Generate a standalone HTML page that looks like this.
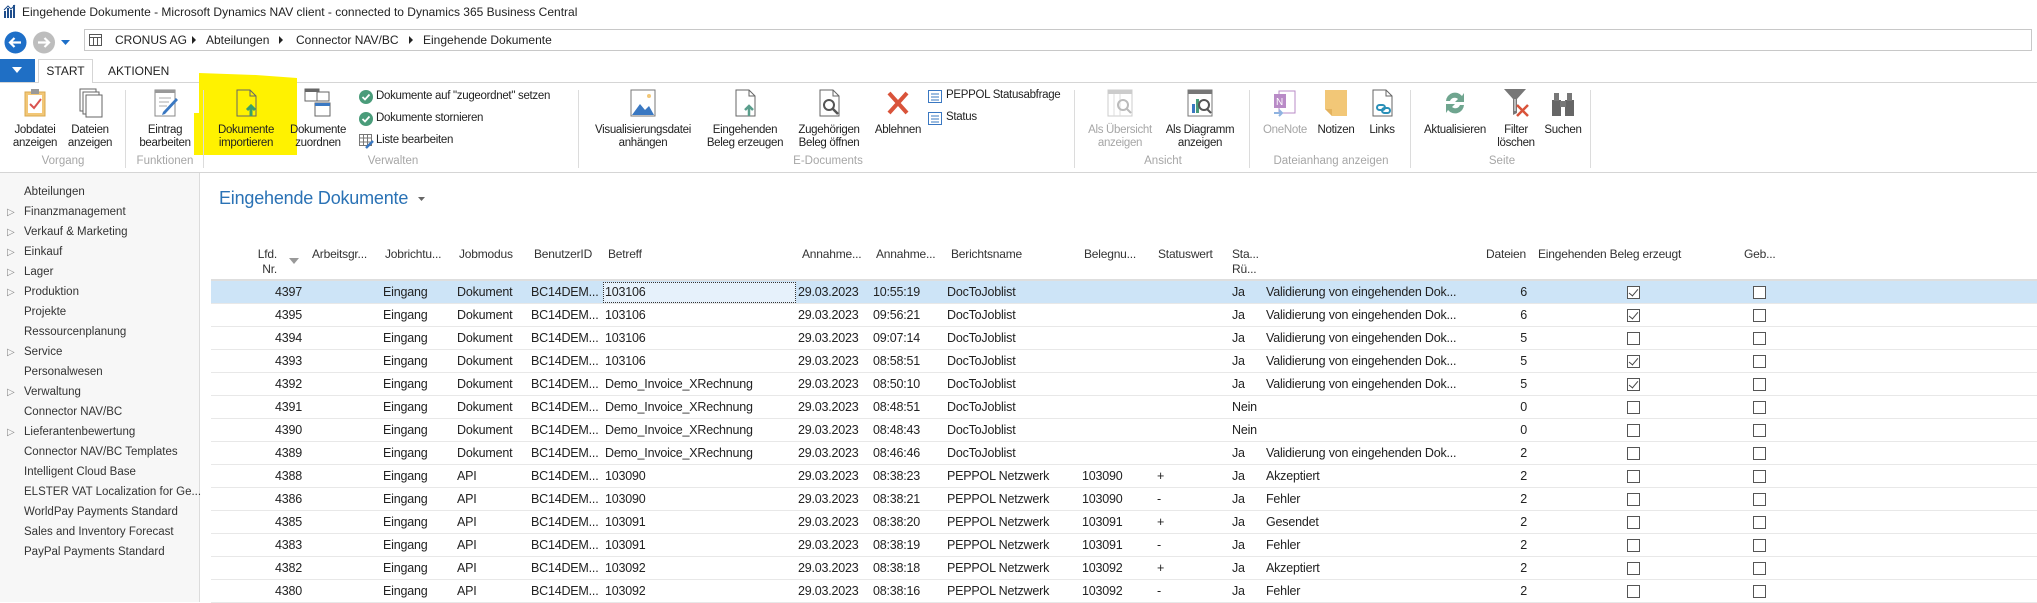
<!DOCTYPE html>
<html><head><meta charset="utf-8">
<style>
*{margin:0;padding:0;box-sizing:border-box}
body{width:2037px;height:602px;overflow:hidden;background:#fff;font-family:"Liberation Sans",sans-serif;color:#222;position:relative}
.a{position:absolute;white-space:nowrap}
.btn{position:absolute;top:88px;text-align:center;font-size:11.5px;letter-spacing:-0.3px;line-height:13px;color:#222;white-space:nowrap}
.btn svg{display:block;margin:0 auto 6px auto}
.btn.g{color:#a6a6a6}
.sep{position:absolute;top:90px;width:1px;height:78px;background:#dcdcdc}
.gl{position:absolute;top:155px;font-size:11.5px;color:#a6a6a6;transform:translateX(-50%);white-space:nowrap}
.sm{position:absolute;font-size:11.5px;letter-spacing:-0.3px;color:#222;white-space:nowrap}
.nav{position:absolute;left:24px;font-size:11.5px;color:#333;white-space:nowrap}
.tri{position:absolute;left:7px;font-size:10px;color:#888;line-height:14px}
.h{position:absolute;font-size:12px;letter-spacing:-0.2px;color:#333;white-space:nowrap;line-height:15px}
.r{position:absolute;left:211px;width:1826px;height:23px;border-bottom:1px solid #e8e8e8;font-size:12.5px;letter-spacing:-0.2px;line-height:22px}
.r span{position:absolute;top:0;white-space:nowrap}
.r .n{left:39px;width:52px;text-align:right}
.r .c1{left:172px}.r .c2{left:246px}.r .c3{left:320px}.r .c4{left:394px}.r .c5{left:587px}.r .c6{left:662px}.r .c7{left:736px}.r .c8{left:871px}.r .c9{left:946px}.r .c10{left:1021px}.r .c11{left:1055px}
.r .d{left:1276px;width:40px;text-align:right}
.cb{position:absolute;top:5px;width:13px;height:13px;border:1px solid #555;background:#fff}
.cb.k::after{content:"";position:absolute;left:3px;top:0px;width:4px;height:8px;border-right:1px solid #444;border-bottom:1px solid #444;transform:rotate(40deg)}
.cb.x{left:1416px}.cb.y{left:1542px}
.bc{position:absolute;top:33px;font-size:12px;color:#222;white-space:nowrap}
.ar{position:absolute;top:36px;width:0;height:0;border-top:4px solid transparent;border-bottom:4px solid transparent;border-left:4px solid #222}
</style></head><body>

<!-- title bar -->
<svg class="a" style="left:3px;top:4px" width="13" height="14" viewBox="0 0 13 14"><rect x="1" y="7" width="2" height="7" fill="#1f4e8c"/><rect x="4" y="4" width="2" height="10" fill="#1f4e8c"/><rect x="7" y="6" width="2" height="8" fill="#1f4e8c"/><rect x="10" y="1" width="2" height="13" fill="#1f4e8c"/><path d="M1 6 L5 2 L8 5 L12 1" stroke="#1f4e8c" fill="none"/></svg>
<div class="a" style="left:22px;top:5px;font-size:12px;color:#222">Eingehende Dokumente - Microsoft Dynamics NAV client - connected to Dynamics 365 Business Central</div>

<!-- nav bar -->
<svg class="a" style="left:4px;top:31px" width="75" height="23" viewBox="0 0 75 23">
<circle cx="11.5" cy="11.5" r="11" fill="#1e6fc8"/><path d="M17 11.5H6M10.5 7L6 11.5 10.5 16" stroke="#fff" stroke-width="2.2" fill="none"/>
<circle cx="40" cy="11.5" r="11" fill="#bdbdbd"/><path d="M34 11.5H45M40.5 7L45 11.5 40.5 16" stroke="#fff" stroke-width="2.2" fill="none"/>
<path d="M57 9h9l-4.5 5z" fill="#1e6fc8"/></svg>
<div class="a" style="left:84px;top:29px;width:1948px;height:22px;border:1px solid #c8c8c8"></div>
<svg class="a" style="left:89px;top:34px" width="13" height="12" viewBox="0 0 13 12"><rect x=".5" y=".5" width="12" height="11" fill="none" stroke="#555"/><path d="M.5 3.5h12M4.5 3.5v8M8.5 3.5v8" stroke="#555"/></svg>
<div class="bc" style="left:115px">CRONUS AG</div>
<div class="ar" style="left:192px"></div>
<div class="bc" style="left:206px">Abteilungen</div>
<div class="ar" style="left:279px"></div>
<div class="bc" style="left:296px">Connector NAV/BC</div>
<div class="ar" style="left:409px"></div>
<div class="bc" style="left:423px">Eingehende Dokumente</div>

<!-- tabs -->
<div class="a" style="left:0;top:59px;width:35px;height:23px;background:#1f6fc5"></div>
<svg class="a" style="left:12px;top:67px" width="10" height="6"><path d="M0 0h10L5 6z" fill="#fff"/></svg>
<div class="a" style="left:0;top:82px;width:2037px;height:1px;background:#d5d5d5"></div>
<div class="a" style="left:38px;top:59px;width:55px;height:24px;border:1px solid #d5d5d5;border-bottom:none;background:#fff;font-size:12px;text-align:center;line-height:22px;color:#222">START</div>
<div class="a" style="left:108px;top:64px;font-size:12px;color:#222">AKTIONEN</div>

<!-- yellow highlight -->
<div class="a" style="left:194px;top:73px;width:103px;height:82px;background:#fff200;clip-path:polygon(5px 0,60% 2px,100% 5px,100% 100%,0 100%,0 40px,5px 40px)"></div>

<!-- ribbon -->
<div class="a" style="left:0;top:172px;width:2037px;height:1px;background:#d5d5d5"></div>

<div class="btn" style="left:8px;width:54px"><svg width="28" height="30" viewBox="0 0 28 30"><rect x="4" y="4" width="20" height="24" fill="#f2c777" stroke="#d9a84f"/><rect x="7" y="7" width="14" height="18" fill="#fff"/><rect x="10" y="1" width="8" height="5" fill="#999"/><path d="M9 16l4 4 7-9" stroke="#d9534f" stroke-width="2" fill="none"/></svg>Jobdatei<br>anzeigen</div>
<div class="btn" style="left:64px;width:52px"><svg width="28" height="30" viewBox="0 0 28 30"><rect x="4" y="1" width="16" height="22" fill="#fff" stroke="#666"/><rect x="7" y="4" width="16" height="22" fill="#fff" stroke="#666"/><rect x="10" y="7" width="16" height="22" fill="#fff" stroke="#666"/></svg>Dateien<br>anzeigen</div>
<div class="btn" style="left:137px;width:56px"><svg width="28" height="30" viewBox="0 0 28 30"><rect x="4" y="2" width="20" height="26" fill="#fff" stroke="#888"/><rect x="4" y="2" width="20" height="3" fill="#999"/><path d="M8 10h12M8 14h10M8 18h8" stroke="#aaa"/><path d="M12 24l13-14 2 2-13 14-3 1z" fill="#3a78c2"/></svg>Eintrag<br>bearbeiten</div>
<div class="sep" style="left:125px"></div>
<div class="sep" style="left:203px"></div>
<div class="btn" style="left:212px;width:68px"><svg width="28" height="30" viewBox="0 0 28 30"><path d="M5 2h13l6 6v20H5z" fill="none" stroke="#666"/><path d="M18 2v6h6" fill="none" stroke="#666"/><path d="M19 28v-9M15 22l4-4 4 4" stroke="#3aa06b" stroke-width="3" fill="none"/></svg>Dokumente<br>importieren</div>
<div class="btn" style="left:284px;width:68px"><svg width="28" height="30" viewBox="0 0 28 30"><rect x="1" y="1" width="14" height="12" fill="#fff" stroke="#666"/><rect x="1" y="1" width="14" height="3" fill="#666"/><rect x="11" y="15" width="15" height="13" fill="#fff" stroke="#666"/><rect x="11" y="15" width="15" height="3" fill="#3a78c2"/><rect x="13" y="4" width="12" height="9" fill="#fff" stroke="#666"/></svg>Dokumente<br>zuordnen</div>
<svg class="a" style="left:359px;top:90px" width="14" height="14"><circle cx="7" cy="7" r="7" fill="#4a9c7a"/><path d="M3.5 7l2.5 2.5 4.5-5" stroke="#fff" stroke-width="1.8" fill="none"/></svg>
<div class="sm" style="left:376px;top:90px">Dokumente auf "zugeordnet" setzen</div>
<svg class="a" style="left:359px;top:112px" width="14" height="14"><circle cx="7" cy="7" r="7" fill="#4a9c7a"/><path d="M3.5 7l2.5 2.5 4.5-5" stroke="#fff" stroke-width="1.8" fill="none"/></svg>
<div class="sm" style="left:376px;top:112px">Dokumente stornieren</div>
<svg class="a" style="left:359px;top:134px" width="15" height="15"><rect x=".5" y=".5" width="12" height="11" fill="#fff" stroke="#777"/><path d="M.5 4h12M.5 8h12M4.5 .5v11M8.5 .5v11" stroke="#777"/><path d="M7 14l7-7" stroke="#3a78c2" stroke-width="2.5"/></svg>
<div class="sm" style="left:376px;top:134px">Liste bearbeiten</div>
<div class="sep" style="left:578px"></div>

<div class="btn" style="left:588px;width:110px"><svg width="28" height="30" viewBox="0 0 28 30"><rect x="2" y="2" width="24" height="26" fill="#fff" stroke="#777"/><path d="M3 27l8-11 5 6 4-4 5 9z" fill="#3a78c2"/><circle cx="20" cy="8" r="2" fill="#f2c777"/></svg>Visualisierungsdatei<br>anhängen</div>
<div class="btn" style="left:705px;width:80px"><svg width="28" height="30" viewBox="0 0 28 30"><path d="M5 2h13l6 6v20H5z" fill="none" stroke="#666"/><path d="M18 2v6h6" fill="none" stroke="#666"/><path d="M18 28v-9M14 22l4-4 4 4" stroke="#5a9e8c" stroke-width="2.5" fill="none"/></svg>Eingehenden<br>Beleg erzeugen</div>
<div class="btn" style="left:794px;width:70px"><svg width="28" height="30" viewBox="0 0 28 30"><path d="M5 2h13l6 6v20H5z" fill="none" stroke="#666"/><path d="M18 2v6h6" fill="none" stroke="#666"/><circle cx="14" cy="17" r="5" fill="none" stroke="#555" stroke-width="2"/><path d="M18 21l5 5" stroke="#555" stroke-width="2.5"/></svg>Zugehörigen<br>Beleg öffnen</div>
<div class="btn" style="left:870px;width:56px"><svg width="28" height="30" viewBox="0 0 28 30"><path d="M5 5l18 20M23 5L5 25" stroke="#d9533a" stroke-width="4"/></svg>Ablehnen</div>
<svg class="a" style="left:928px;top:90px" width="14" height="13"><rect x=".5" y=".5" width="13" height="12" fill="#fff" stroke="#3a78c2"/><path d="M3 4h8M3 7h8M3 10h8" stroke="#3a78c2"/></svg>
<div class="sm" style="left:946px;top:89px">PEPPOL Statusabfrage</div>
<svg class="a" style="left:928px;top:112px" width="14" height="13"><rect x=".5" y=".5" width="13" height="12" fill="#fff" stroke="#3a78c2"/><path d="M3 4h8M3 7h8M3 10h8" stroke="#3a78c2"/></svg>
<div class="sm" style="left:946px;top:111px">Status</div>
<div class="sep" style="left:1074px"></div>

<div class="btn g" style="left:1082px;width:76px"><svg width="28" height="30" viewBox="0 0 28 30"><rect x="2" y="2" width="24" height="26" fill="#fff" stroke="#ccc"/><rect x="2" y="2" width="24" height="4" fill="#ccc"/><path d="M8 6v22M14 6v22" stroke="#ddd"/><circle cx="17" cy="17" r="5" fill="none" stroke="#bbb" stroke-width="2"/><path d="M21 21l4 4" stroke="#bbb" stroke-width="2"/></svg>Als Übersicht<br>anzeigen</div>
<div class="btn" style="left:1160px;width:80px"><svg width="28" height="30" viewBox="0 0 28 30"><rect x="2" y="2" width="24" height="26" fill="#fff" stroke="#777"/><rect x="2" y="2" width="24" height="4" fill="#777"/><rect x="6" y="16" width="3" height="9" fill="#3a78c2"/><rect x="10" y="11" width="3" height="14" fill="#4a9c7a"/><circle cx="18" cy="17" r="5" fill="none" stroke="#555" stroke-width="2"/><path d="M21 21l4 4" stroke="#555" stroke-width="2"/></svg>Als Diagramm<br>anzeigen</div>
<div class="sep" style="left:1249px"></div>
<div class="btn g" style="left:1260px;width:50px"><svg width="28" height="30" viewBox="0 0 28 30"><rect x="8" y="3" width="16" height="22" fill="#fff" stroke="#b98bc7"/><rect x="3" y="6" width="12" height="14" fill="#b98bc7"/><text x="5" y="17" font-size="10" fill="#fff" font-family="Liberation Sans">N</text><path d="M3 25h8M8 22l3 3-3 3" stroke="#8fb3e0" stroke-width="2" fill="none"/></svg>OneNote</div>
<div class="btn" style="left:1312px;width:48px"><svg width="28" height="30" viewBox="0 0 28 30"><path d="M3 2h22v26H10l-7-7z" fill="#f2c777"/><path d="M3 21h7v7z" fill="#e3b25e"/></svg>Notizen</div>
<div class="btn" style="left:1364px;width:36px"><svg width="28" height="30" viewBox="0 0 28 30"><path d="M5 2h13l6 6v20H5z" fill="#fff" stroke="#666"/><path d="M18 2v6h6" fill="none" stroke="#666"/><rect x="9" y="17" width="8" height="5" rx="2.5" fill="none" stroke="#2a90b8" stroke-width="2"/><rect x="14" y="20" width="8" height="5" rx="2.5" fill="none" stroke="#2a90b8" stroke-width="2"/></svg>Links</div>
<div class="sep" style="left:1410px"></div>
<div class="btn" style="left:1418px;width:74px"><svg width="28" height="30" viewBox="0 0 28 30"><path d="M5 13a9 9 0 0 1 16-5l2-3v9h-9l3-3a5 5 0 0 0-8 2z" fill="#6fa58f"/><path d="M23 17a9 9 0 0 1-16 5l-2 3v-9h9l-3 3a5 5 0 0 0 8-2z" fill="#6fa58f"/></svg>Aktualisieren</div>
<div class="btn" style="left:1496px;width:40px"><svg width="28" height="30" viewBox="0 0 28 30"><path d="M2 1h22l-9 10v14l-4 2V11z" fill="#777"/><path d="M13 11v12" stroke="#fff"/><path d="M15 17l11 11M26 17L15 28" stroke="#d9533a" stroke-width="2.5"/></svg>Filter<br>löschen</div>
<div class="btn" style="left:1543px;width:40px"><svg width="28" height="30" viewBox="0 0 28 30"><rect x="3" y="12" width="9" height="16" fill="#666"/><rect x="16" y="12" width="9" height="16" fill="#666"/><rect x="5" y="5" width="5" height="8" fill="#777"/><rect x="18" y="5" width="5" height="8" fill="#777"/><rect x="11" y="13" width="6" height="6" fill="#777"/></svg>Suchen</div>
<div class="sep" style="left:1590px"></div>

<div class="gl" style="left:63px">Vorgang</div>
<div class="gl" style="left:165px">Funktionen</div>
<div class="gl" style="left:393px">Verwalten</div>
<div class="gl" style="left:828px">E-Documents</div>
<div class="gl" style="left:1163px">Ansicht</div>
<div class="gl" style="left:1331px">Dateianhang anzeigen</div>
<div class="gl" style="left:1502px">Seite</div>

<!-- left nav -->
<div class="a" style="left:0;top:173px;width:200px;height:429px;background:#f7f7f7;border-right:1px solid #dcdcdc"></div>
<div class="nav" style="top:186px">Abteilungen</div>
<div class="tri" style="top:206px">&#9655;</div><div class="nav" style="top:206px">Finanzmanagement</div>
<div class="tri" style="top:226px">&#9655;</div><div class="nav" style="top:226px">Verkauf &amp; Marketing</div>
<div class="tri" style="top:246px">&#9655;</div><div class="nav" style="top:246px">Einkauf</div>
<div class="tri" style="top:266px">&#9655;</div><div class="nav" style="top:266px">Lager</div>
<div class="tri" style="top:286px">&#9655;</div><div class="nav" style="top:286px">Produktion</div>
<div class="nav" style="top:306px">Projekte</div>
<div class="nav" style="top:326px">Ressourcenplanung</div>
<div class="tri" style="top:346px">&#9655;</div><div class="nav" style="top:346px">Service</div>
<div class="nav" style="top:366px">Personalwesen</div>
<div class="tri" style="top:386px">&#9655;</div><div class="nav" style="top:386px">Verwaltung</div>
<div class="nav" style="top:406px">Connector NAV/BC</div>
<div class="tri" style="top:426px">&#9655;</div><div class="nav" style="top:426px">Lieferantenbewertung</div>
<div class="nav" style="top:446px">Connector NAV/BC Templates</div>
<div class="nav" style="top:466px">Intelligent Cloud Base</div>
<div class="nav" style="top:486px">ELSTER VAT Localization for Ge...</div>
<div class="nav" style="top:506px">WorldPay Payments Standard</div>
<div class="nav" style="top:526px">Sales and Inventory Forecast</div>
<div class="nav" style="top:546px">PayPal Payments Standard</div>

<!-- page title -->
<div class="a" style="left:219px;top:188px;font-size:18px;color:#2a72b5;letter-spacing:-0.2px">Eingehende Dokumente</div>
<svg class="a" style="left:418px;top:197px" width="7" height="4"><path d="M0 0h7L3.5 4z" fill="#666"/></svg>

<!-- headers -->
<div class="h" style="left:250px;top:247px;width:27px;text-align:right">Lfd.<br>Nr.</div>
<svg class="a" style="left:289px;top:258px" width="10" height="6"><path d="M0 0h10L5 6z" fill="#999"/></svg>
<div class="h" style="left:312px;top:247px">Arbeitsgr...</div>
<div class="h" style="left:385px;top:247px">Jobrichtu...</div>
<div class="h" style="left:459px;top:247px">Jobmodus</div>
<div class="h" style="left:534px;top:247px">BenutzerID</div>
<div class="h" style="left:608px;top:247px">Betreff</div>
<div class="h" style="left:802px;top:247px">Annahme...</div>
<div class="h" style="left:876px;top:247px">Annahme...</div>
<div class="h" style="left:951px;top:247px">Berichtsname</div>
<div class="h" style="left:1084px;top:247px">Belegnu...</div>
<div class="h" style="left:1158px;top:247px">Statuswert</div>
<div class="h" style="left:1232px;top:247px">Sta...<br>Rü...</div>
<div class="h" style="left:1486px;top:247px">Dateien</div>
<div class="h" style="left:1538px;top:247px">Eingehenden Beleg erzeugt</div>
<div class="h" style="left:1744px;top:247px">Geb...</div>
<div class="a" style="left:211px;top:279px;width:1826px;height:2px;background:#dedede"></div>

<!-- rows -->
<div class="r" style="top:281px;background:#cde4f7"><div class="a" style="left:392px;top:1px;width:193px;height:21px;border:1px dotted #333;background:#e6f1fb"></div><span class="n">4397</span><span class="c1">Eingang</span><span class="c2">Dokument</span><span class="c3">BC14DEM...</span><span class="c4">103106</span><span class="c5">29.03.2023</span><span class="c6">10:55:19</span><span class="c7">DocToJoblist</span><span class="c10">Ja</span><span class="c11">Validierung von eingehenden Dok...</span><span class="d">6</span><i class="cb x k"></i><i class="cb y"></i></div>
<div class="r" style="top:304px"><span class="n">4395</span><span class="c1">Eingang</span><span class="c2">Dokument</span><span class="c3">BC14DEM...</span><span class="c4">103106</span><span class="c5">29.03.2023</span><span class="c6">09:56:21</span><span class="c7">DocToJoblist</span><span class="c10">Ja</span><span class="c11">Validierung von eingehenden Dok...</span><span class="d">6</span><i class="cb x k"></i><i class="cb y"></i></div>
<div class="r" style="top:327px"><span class="n">4394</span><span class="c1">Eingang</span><span class="c2">Dokument</span><span class="c3">BC14DEM...</span><span class="c4">103106</span><span class="c5">29.03.2023</span><span class="c6">09:07:14</span><span class="c7">DocToJoblist</span><span class="c10">Ja</span><span class="c11">Validierung von eingehenden Dok...</span><span class="d">5</span><i class="cb x"></i><i class="cb y"></i></div>
<div class="r" style="top:350px"><span class="n">4393</span><span class="c1">Eingang</span><span class="c2">Dokument</span><span class="c3">BC14DEM...</span><span class="c4">103106</span><span class="c5">29.03.2023</span><span class="c6">08:58:51</span><span class="c7">DocToJoblist</span><span class="c10">Ja</span><span class="c11">Validierung von eingehenden Dok...</span><span class="d">5</span><i class="cb x k"></i><i class="cb y"></i></div>
<div class="r" style="top:373px"><span class="n">4392</span><span class="c1">Eingang</span><span class="c2">Dokument</span><span class="c3">BC14DEM...</span><span class="c4">Demo_Invoice_XRechnung</span><span class="c5">29.03.2023</span><span class="c6">08:50:10</span><span class="c7">DocToJoblist</span><span class="c10">Ja</span><span class="c11">Validierung von eingehenden Dok...</span><span class="d">5</span><i class="cb x k"></i><i class="cb y"></i></div>
<div class="r" style="top:396px"><span class="n">4391</span><span class="c1">Eingang</span><span class="c2">Dokument</span><span class="c3">BC14DEM...</span><span class="c4">Demo_Invoice_XRechnung</span><span class="c5">29.03.2023</span><span class="c6">08:48:51</span><span class="c7">DocToJoblist</span><span class="c10">Nein</span><span class="d">0</span><i class="cb x"></i><i class="cb y"></i></div>
<div class="r" style="top:419px"><span class="n">4390</span><span class="c1">Eingang</span><span class="c2">Dokument</span><span class="c3">BC14DEM...</span><span class="c4">Demo_Invoice_XRechnung</span><span class="c5">29.03.2023</span><span class="c6">08:48:43</span><span class="c7">DocToJoblist</span><span class="c10">Nein</span><span class="d">0</span><i class="cb x"></i><i class="cb y"></i></div>
<div class="r" style="top:442px"><span class="n">4389</span><span class="c1">Eingang</span><span class="c2">Dokument</span><span class="c3">BC14DEM...</span><span class="c4">Demo_Invoice_XRechnung</span><span class="c5">29.03.2023</span><span class="c6">08:46:46</span><span class="c7">DocToJoblist</span><span class="c10">Ja</span><span class="c11">Validierung von eingehenden Dok...</span><span class="d">2</span><i class="cb x"></i><i class="cb y"></i></div>
<div class="r" style="top:465px"><span class="n">4388</span><span class="c1">Eingang</span><span class="c2">API</span><span class="c3">BC14DEM...</span><span class="c4">103090</span><span class="c5">29.03.2023</span><span class="c6">08:38:23</span><span class="c7">PEPPOL Netzwerk</span><span class="c8">103090</span><span class="c9">+</span><span class="c10">Ja</span><span class="c11">Akzeptiert</span><span class="d">2</span><i class="cb x"></i><i class="cb y"></i></div>
<div class="r" style="top:488px"><span class="n">4386</span><span class="c1">Eingang</span><span class="c2">API</span><span class="c3">BC14DEM...</span><span class="c4">103090</span><span class="c5">29.03.2023</span><span class="c6">08:38:21</span><span class="c7">PEPPOL Netzwerk</span><span class="c8">103090</span><span class="c9">-</span><span class="c10">Ja</span><span class="c11">Fehler</span><span class="d">2</span><i class="cb x"></i><i class="cb y"></i></div>
<div class="r" style="top:511px"><span class="n">4385</span><span class="c1">Eingang</span><span class="c2">API</span><span class="c3">BC14DEM...</span><span class="c4">103091</span><span class="c5">29.03.2023</span><span class="c6">08:38:20</span><span class="c7">PEPPOL Netzwerk</span><span class="c8">103091</span><span class="c9">+</span><span class="c10">Ja</span><span class="c11">Gesendet</span><span class="d">2</span><i class="cb x"></i><i class="cb y"></i></div>
<div class="r" style="top:534px"><span class="n">4383</span><span class="c1">Eingang</span><span class="c2">API</span><span class="c3">BC14DEM...</span><span class="c4">103091</span><span class="c5">29.03.2023</span><span class="c6">08:38:19</span><span class="c7">PEPPOL Netzwerk</span><span class="c8">103091</span><span class="c9">-</span><span class="c10">Ja</span><span class="c11">Fehler</span><span class="d">2</span><i class="cb x"></i><i class="cb y"></i></div>
<div class="r" style="top:557px"><span class="n">4382</span><span class="c1">Eingang</span><span class="c2">API</span><span class="c3">BC14DEM...</span><span class="c4">103092</span><span class="c5">29.03.2023</span><span class="c6">08:38:18</span><span class="c7">PEPPOL Netzwerk</span><span class="c8">103092</span><span class="c9">+</span><span class="c10">Ja</span><span class="c11">Akzeptiert</span><span class="d">2</span><i class="cb x"></i><i class="cb y"></i></div>
<div class="r" style="top:580px"><span class="n">4380</span><span class="c1">Eingang</span><span class="c2">API</span><span class="c3">BC14DEM...</span><span class="c4">103092</span><span class="c5">29.03.2023</span><span class="c6">08:38:16</span><span class="c7">PEPPOL Netzwerk</span><span class="c8">103092</span><span class="c9">-</span><span class="c10">Ja</span><span class="c11">Fehler</span><span class="d">2</span><i class="cb x"></i><i class="cb y"></i></div>

</body></html>
